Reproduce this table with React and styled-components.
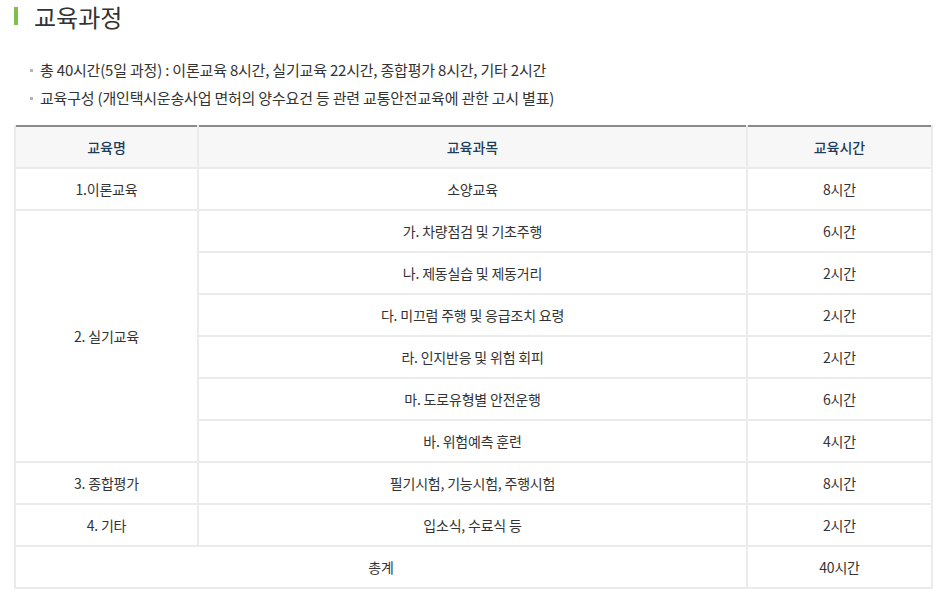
import React from "react";
import styled, { createGlobalStyle } from "styled-components";

const Global = createGlobalStyle`
  html, body { margin: 0; padding: 0; background: #fff; }
  body { font-family: "Noto Sans CJK KR", "Noto Sans", sans-serif; color: #333; }
`;

const Page = styled.div`
  width: 940px;
  padding: 0 9px 0 14px;
  box-sizing: border-box;
`;

const Title = styled.h2`
  margin: 0;
  padding: 0 0 0 20px;
  line-height: 33px;
  font-size: 24px;
  font-weight: 400;
  color: #333;
  position: relative;
  &::before {
    content: "";
    position: absolute;
    left: 0;
    top: 7px;
    width: 4px;
    height: 18px;
    background: #7fbf4d;
  }
`;

const List = styled.ul`
  list-style: none;
  margin: 23px 0 0;
  padding: 0 0 0 14px;
`;

const Item = styled.li`
  position: relative;
  padding-left: 12px;
  font-size: 15px;
  line-height: 28px;
  color: #333;
  letter-spacing: -0.2px;
  &::before {
    content: "";
    position: absolute;
    left: 2px;
    top: 13px;
    width: 3px;
    height: 3px;
    background: #b5b5b5;
  }
`;

const Table = styled.table`
  margin-top: 13px;
  width: 917px;
  border-collapse: collapse;
  table-layout: fixed;
  border-top: 2px solid #8a8a8a;
  font-size: 14px;
`;

const Th = styled.th`
  height: 40px;
  background: #f7f7f7;
  border: 2px solid #ebebeb;
  border-top: none;
  font-weight: 500;
  color: #1d3d5c;
  text-align: center;
  padding: 0;
`;

const Td = styled.td`
  height: 40px;
  border: 2px solid #ebebeb;
  text-align: center;
  color: #333;
  padding: 0;
  letter-spacing: -0.2px;
`;

const rows = [
  ["가. 차량점검 및 기초주행", "6시간"],
  ["나. 제동실습 및 제동거리", "2시간"],
  ["다. 미끄럼 주행 및 응급조치 요령", "2시간"],
  ["라. 인지반응 및 위험 회피", "2시간"],
  ["마. 도로유형별 안전운행", "6시간"],
  ["바. 위험예측 훈련", "4시간"],
];

export default function App() {
  return (
    <Page>
      <Global />
      <Title>교육과정</Title>
      <List>
        <Item>총 40시간(5일 과정) : 이론교육 8시간, 실기교육 22시간, 종합평가 8시간, 기타 2시간</Item>
        <Item>교육구성 (개인택시운송사업 면허의 양수요건 등 관련 교통안전교육에 관한 고시 별표)</Item>
      </List>
      <Table>
        <colgroup>
          <col style={{ width: 183 }} />
          <col style={{ width: 549 }} />
          <col style={{ width: 185 }} />
        </colgroup>
        <thead>
          <tr>
            <Th>교육명</Th>
            <Th>교육과목</Th>
            <Th>교육시간</Th>
          </tr>
        </thead>
        <tbody>
          <tr>
            <Td>1.이론교육</Td>
            <Td>소양교육</Td>
            <Td>8시간</Td>
          </tr>
          {rows.map((r, i) => (
            <tr key={i}>
              {i === 0 && <Td rowSpan={6}>2. 실기교육</Td>}
              <Td>{r[0]}</Td>
              <Td>{r[1]}</Td>
            </tr>
          ))}
          <tr>
            <Td>3. 종합평가</Td>
            <Td>필기시험, 기능시험, 주행시험</Td>
            <Td>8시간</Td>
          </tr>
          <tr>
            <Td>4. 기타</Td>
            <Td>입소식, 수료식 등</Td>
            <Td>2시간</Td>
          </tr>
          <tr>
            <Td colSpan={2}>총계</Td>
            <Td>40시간</Td>
          </tr>
        </tbody>
      </Table>
    </Page>
  );
}
